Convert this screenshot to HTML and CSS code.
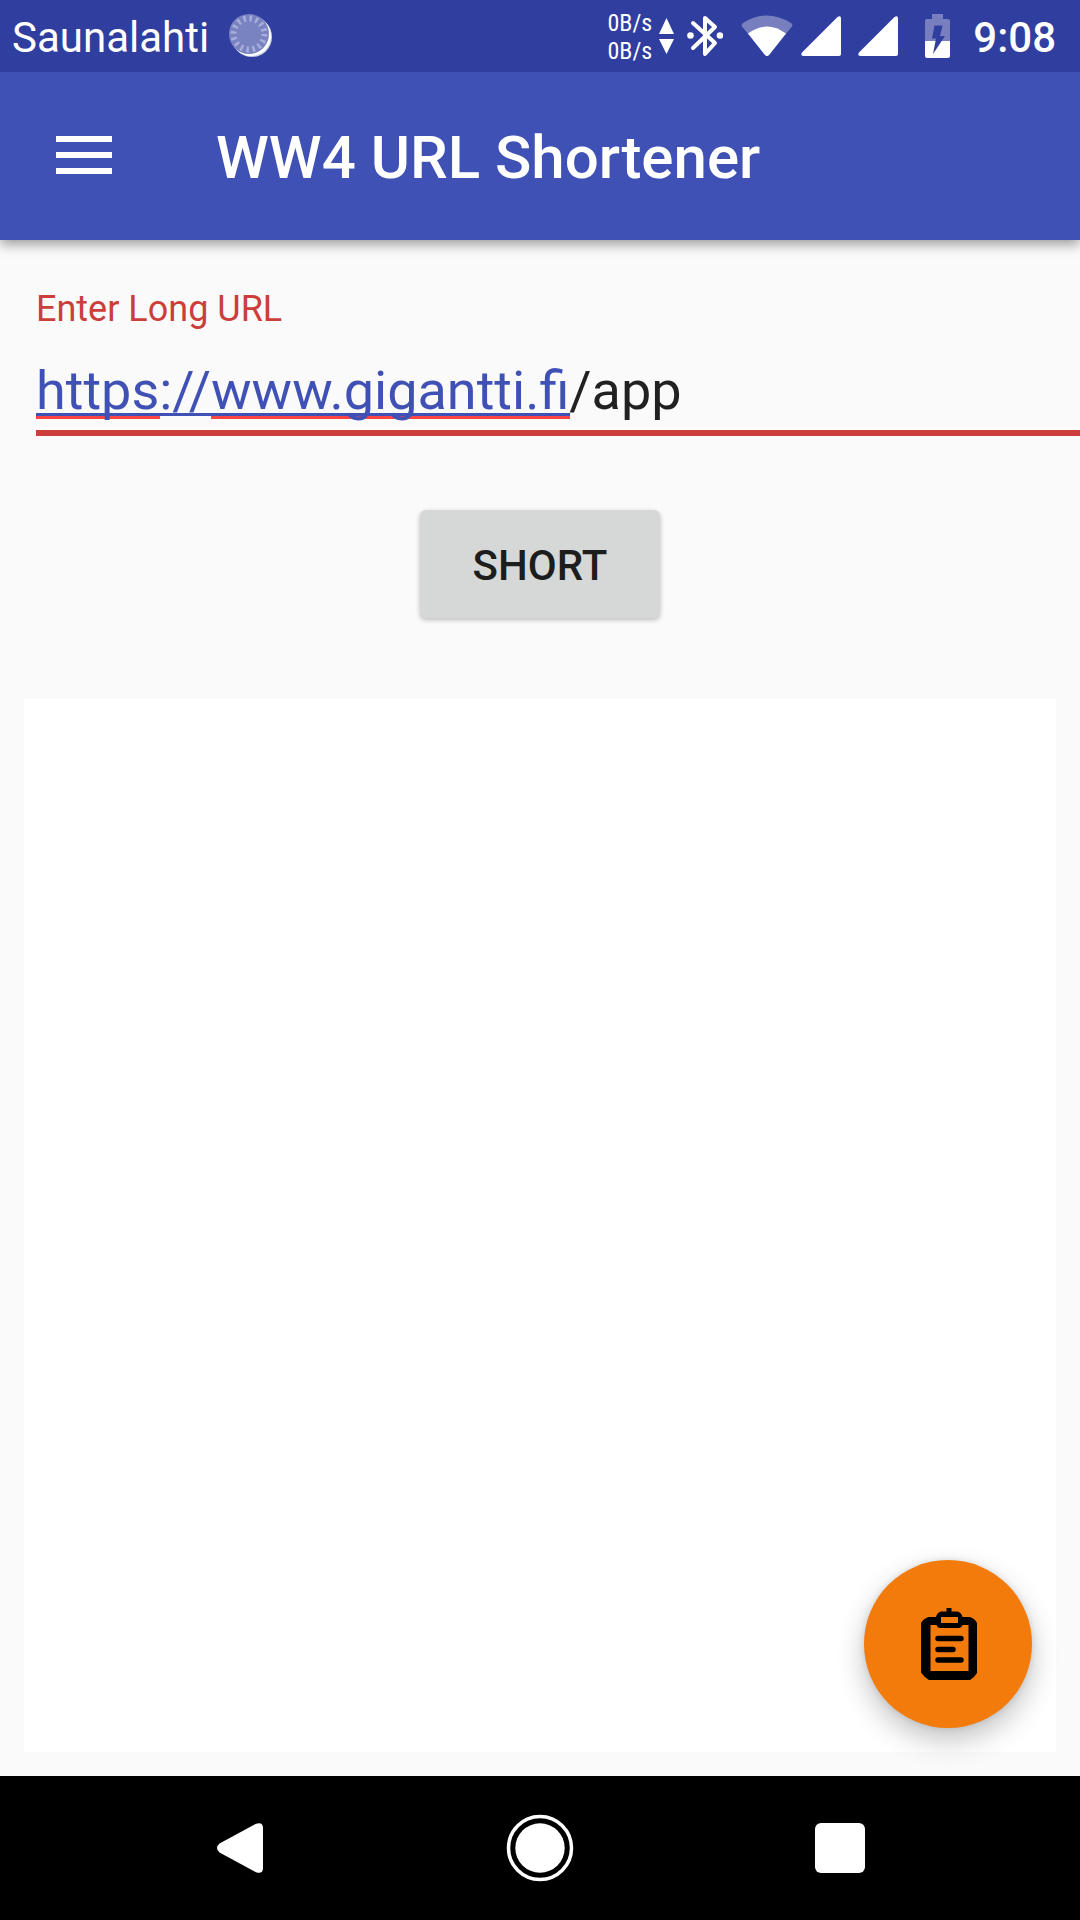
FILE: index.html
```html
<!DOCTYPE html>
<html lang="en">
<head>
<meta charset="utf-8">
<meta name="viewport" content="width=device-width, initial-scale=1">
<title>WW4 URL Shortener</title>
<link rel="stylesheet" href="styles.css">
</head>
<body>
<div class="status-bar">
  <span class="carrier">Saunalahti</span>
  <svg class="loader" width="44" height="44" viewBox="0 0 44 44" aria-hidden="true">
    <circle cx="23" cy="23" r="20" fill="#c9cde6"/>
    <circle cx="22" cy="22" r="20" fill="#fff"/>
    <circle cx="20" cy="20" r="20" fill="#7a83c1"/>
    <circle cx="20" cy="20" r="15.500" fill="none" stroke="#a9afda" stroke-width="6" stroke-dasharray="2.400 3.690"/>
  </svg>
  <div class="status-icons">
    <div class="traffic"><span>0B/s</span><span>0B/s</span></div>
    <svg class="arrows" width="15" height="36" viewBox="0 0 15 36" aria-hidden="true">
      <path d="M7.500 0L15 16H0zM0 21h15L7.500 36z" fill="#fff"/>
    </svg>
    <svg class="bluetooth" width="36" height="44" viewBox="0 0 36 44" aria-hidden="true">
      <path d="M6 9l22 20-10 11V4l10 9L6 34" fill="none" stroke="#fff" stroke-width="4" stroke-linejoin="round" stroke-linecap="round"/>
      <circle cx="3.500" cy="21.500" r="3.300" fill="#fff"/><circle cx="33" cy="21.500" r="3.300" fill="#fff"/>
    </svg>
    <svg class="wifi" width="52" height="42" viewBox="0 0 52 42" aria-hidden="true">
      <path d="M1.500 12Q-.5 10 2 8Q26-7 50 8Q52.500 10 50.500 12L28 40Q26 42 24 40z" fill="#777fbf"/>
      <path d="M7 18.500Q26 4.500 45 18.500L28 40Q26 42 24 40z" fill="#fff"/>
    </svg>
    <svg class="signal" width="40" height="40" viewBox="0 0 40 40" aria-hidden="true">
      <path d="M1 36.500L36.500 1Q40-1 40 2.500V38Q40 40 38 40H2.500Q-1 40 1 36.500z" fill="#fff"/>
    </svg>
    <svg class="signal" width="40" height="40" viewBox="0 0 40 40" aria-hidden="true">
      <path d="M1 36.500L36.500 1Q40-1 40 2.500V38Q40 40 38 40H2.500Q-1 40 1 36.500z" fill="#fff"/>
    </svg>
    <svg class="battery" width="25" height="44" viewBox="0 0 25 44" aria-hidden="true">
      <path d="M7 0h11v5h5q2 0 2 2v20H0V7q0-2 2-2h5z" fill="#777fbf"/>
      <path d="M0 27h25v15q0 2-2 2H2q-2 0-2-2z" fill="#fff"/>
      <path d="M9.500 11.500h8L15 22h5L8 40l3-15.500H7z" fill="#303e9f"/>
    </svg>
    <time class="clock">9:08</time>
  </div>
</div>

<header class="app-bar">
  <button class="menu-button" type="button" aria-label="Open menu">
    <svg width="56" height="38" viewBox="0 0 56 38" aria-hidden="true">
      <path d="M0 0h56v6H0zM0 16h56v6H0zM0 32h56v6H0z" fill="#fff"/>
    </svg>
  </button>
  <h1 class="title">WW4 URL Shortener</h1>
</header>

<main class="content">
  <form class="url-form">
    <label class="url-label" for="long-url">Enter Long URL</label>
    <input class="url-input" id="long-url" type="text" value="https://www.gigantti.fi/app" spellcheck="false">
    <button class="short-button" type="button">SHORT</button>
  </form>
  <section class="result" aria-label="Result"></section>
  <button class="paste-button" type="button" aria-label="Paste from clipboard">
    <svg width="56" height="72" viewBox="0 0 56 72" aria-hidden="true">
      <path d="M25.500 0h5v3.500h6q4 1 5 5.500h7q5 1 7.500 6v50q-3 5-7 7h-41q-5-3-8-7.500V15q3-5 8-6h7q1-4.500 5-5.500h5.500zM9.500 17v46h38V17h-6q-1 3-4 3h-18q-3 0-4-3zM20 9v6h17V9z" fill="#000" fill-rule="evenodd"/>
      <path d="M17 30.500h23M17 41.500h15M17 52h23" fill="none" stroke="#000" stroke-width="5.500" stroke-linecap="round"/>
    </svg>
  </button>
</main>

<nav class="nav-bar" aria-label="System">
  <button class="nav-button" type="button" aria-label="Back">
    <svg width="46" height="50" viewBox="0 0 46 50" aria-hidden="true">
      <path d="M2.500 20.500L39 .700Q46-1.500 46 5v40q0 6.500-7 4.300L2.500 29.500Q-2.500 25 2.500 20.500z" fill="#fff"/>
    </svg>
  </button>
  <button class="nav-button" type="button" aria-label="Home">
    <svg width="68" height="68" viewBox="0 0 68 68" aria-hidden="true">
      <circle cx="34" cy="34" r="31.500" fill="none" stroke="#fff" stroke-width="3.500"/>
      <circle cx="34" cy="34" r="24.700" fill="#fff"/>
    </svg>
  </button>
  <button class="nav-button" type="button" aria-label="Recent apps">
    <svg width="50" height="50" viewBox="0 0 50 50" aria-hidden="true">
      <rect width="50" height="50" rx="6" fill="#fff"/>
    </svg>
  </button>
</nav>
</body>
</html>
```

FILE: styles.css
```css
* {
  box-sizing: border-box;
}

body {
  margin: 0;
  min-height: 100vh;
  display: flex;
  flex-direction: column;
  background: #fafafa;
  color: #212121;
  font-family: Roboto, sans-serif;
}

button {
  margin: 0;
  padding: 0;
  border: 0;
  background: none;
  font: inherit;
}

svg {
  display: block;
  flex: none;
}

.status-bar {
  position: relative;
  z-index: 1;
  height: 72px;
  padding: 0 24px 0 12px;
  display: flex;
  align-items: center;
  background: #303e9f;
  color: #fff;
  font-size: 42px;
  line-height: 48px;
}

.carrier,
.clock {
  padding-top: 4px;
}

.loader {
  margin-left: 20px;
}

.status-icons {
  margin-left: auto;
  display: flex;
  align-items: center;
}

.traffic {
  display: flex;
  flex-direction: column;
  padding-top: 2px;
  font-family: "Roboto Condensed", Roboto, sans-serif;
  font-size: 24px;
  line-height: 28px;
}

.arrows {
  margin-left: 7px;
}

.bluetooth {
  margin-left: 13px;
}

.wifi {
  margin-left: 18px;
}

.signal {
  margin-left: 8px;
}

.signal + .signal {
  margin-left: 17px;
}

.battery {
  margin-left: 27px;
}

.clock {
  margin-left: 23px;
  font-weight: 500;
}

.app-bar {
  height: 168px;
  display: flex;
  align-items: center;
  gap: 48px;
  background: #3f51b5;
  color: #fff;
  box-shadow: 0 4px 12px rgba(0, 0, 0, 0.4);
}

.menu-button {
  width: 168px;
  height: 168px;
  padding-bottom: 2px;
  display: flex;
  align-items: center;
  justify-content: center;
}

.title {
  margin: 0;
  padding-top: 4px;
  font-size: 60px;
  font-weight: 500;
  line-height: 72px;
}

.content {
  position: relative;
  flex: 1;
  display: flex;
  flex-direction: column;
  padding-bottom: 24px;
}

.url-form {
  display: flex;
  flex-direction: column;
  padding: 48px 0 0 36px;
}

.url-label {
  color: #cc3e3b;
  font-size: 36px;
  line-height: 42px;
}

/* The link part of the address is blue; the spelling marks lie below it. */
.url-input {
  width: 100%;
  height: 78px;
  margin: 28px 0 0;
  padding: 0 0 8px;
  border: 0;
  border-bottom: 6px solid #cc3e3b;
  border-radius: 0;
  outline: 0;
  color: transparent;
  caret-color: #cc3e3b;
  font: 54px/64px Roboto, sans-serif;
  background-color: transparent;
  background-image:
    linear-gradient(to right, #3f51b5 534px, #212121 534px),
    linear-gradient(#3f51b5, #3f51b5),
    linear-gradient(#ff4444, #ff4444),
    linear-gradient(#ff4444, #ff4444);
  background-size: 100% 100%, 534px 3px, 124px 3px, 359px 3px;
  background-position: 0 0, 0 55px, 0 58px, 175px 58px;
  background-repeat: no-repeat;
  background-clip: text, border-box, border-box, border-box;
}

.short-button {
  align-self: center;
  width: 240px;
  height: 108px;
  margin: 74px 36px 0 0;
  padding-top: 2px;
  border-radius: 6px;
  background: #d6d8d7;
  color: #1d1d1d;
  font-size: 42px;
  font-weight: 500;
  box-shadow: 0 2px 5px rgba(0, 0, 0, 0.25);
}

.result {
  flex: 1;
  margin: 81px 24px 0;
  background: #fff;
}

.paste-button {
  position: absolute;
  right: 48px;
  bottom: 48px;
  width: 168px;
  height: 168px;
  padding-left: 2px;
  display: flex;
  align-items: center;
  justify-content: center;
  border-radius: 50%;
  background: #f27b0b;
  box-shadow: 0 12px 28px rgba(0, 0, 0, 0.24), 0 0 6px rgba(0, 0, 0, 0.12);
}

.nav-bar {
  position: relative;
  height: 144px;
  display: flex;
  padding: 0 90px;
  background: #000;
}

.nav-button {
  flex: 1;
  display: flex;
  align-items: center;
  justify-content: center;
}
```
